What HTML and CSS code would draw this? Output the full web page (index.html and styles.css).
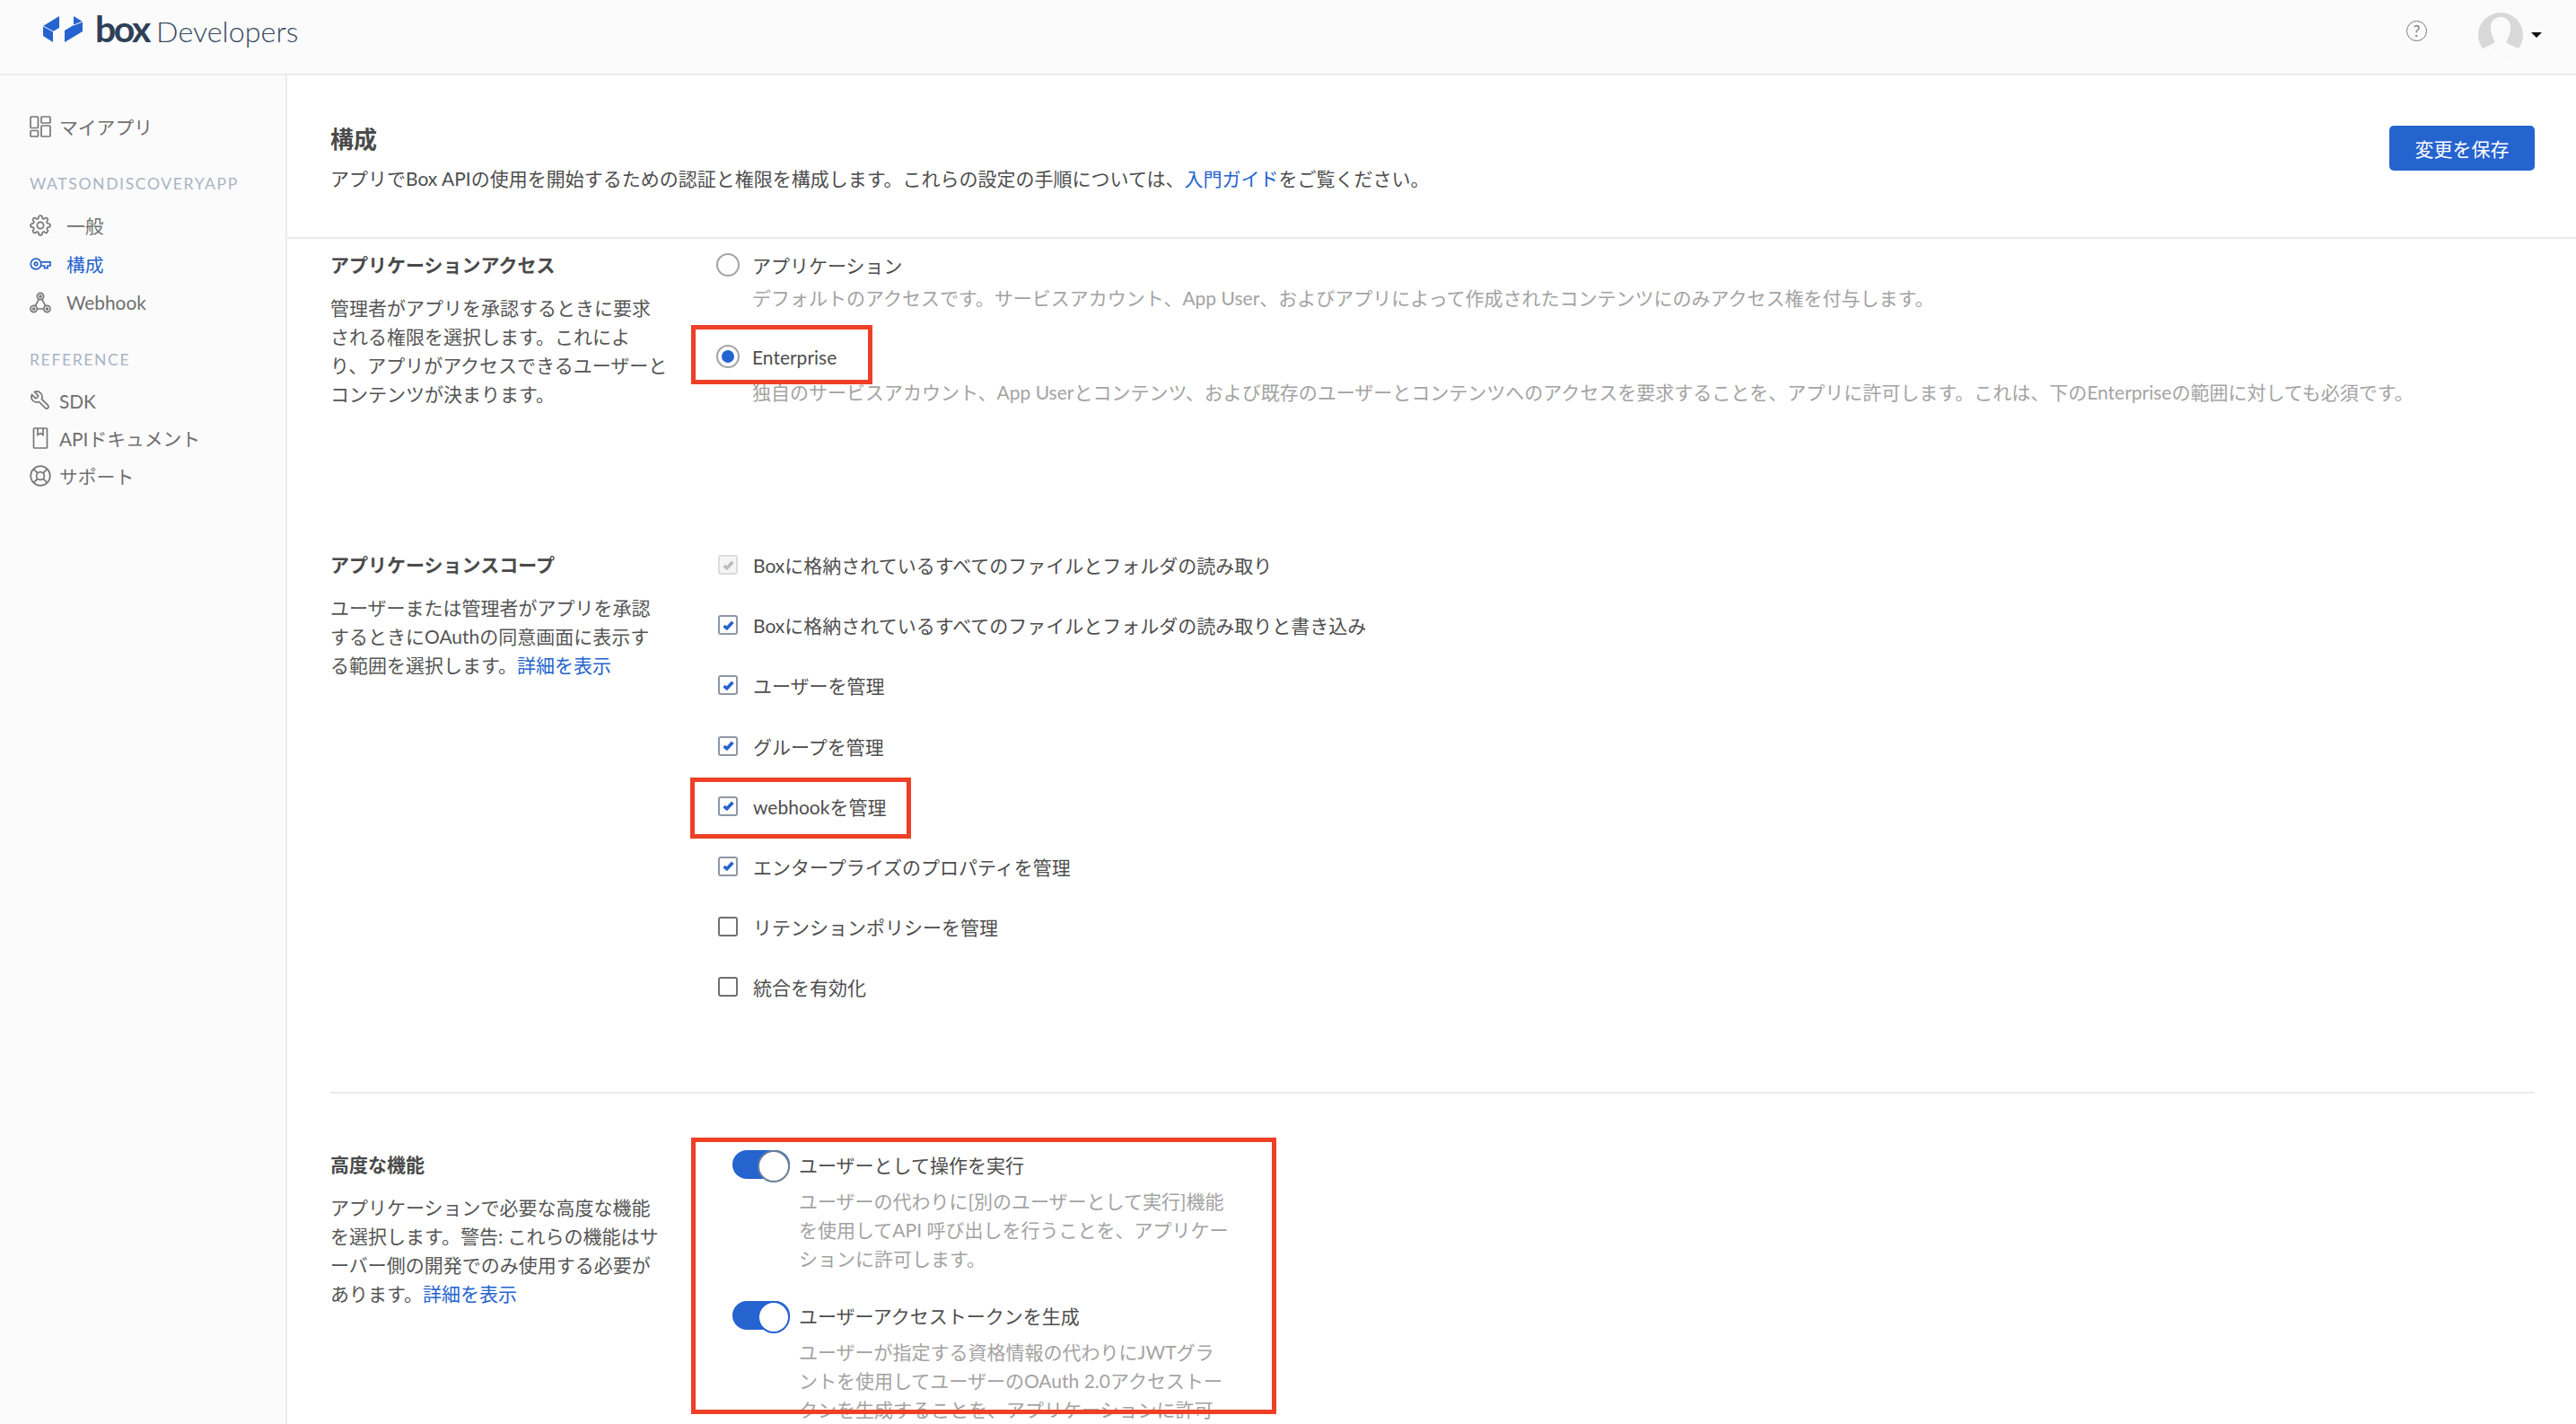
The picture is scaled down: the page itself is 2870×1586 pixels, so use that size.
FILE: index.html
```html
<!DOCTYPE html>
<html lang="ja">
<head>
<meta charset="utf-8">
<title>Box Developers</title>
<link rel="stylesheet" href="styles.css">
</head>
<body>
<div class="app">
  <header class="topbar">
    <a class="logo">
      <svg class="logo-mark" viewBox="0 0 44 30" width="44" height="30">
        <polygon points="0,11 18,0 18,13 11,17 11,29 0,22" fill="#2563cf"/>
        <polygon points="34,0 44,6 44,17 24,29 24,16 34,10" fill="#2563cf"/>
        <line x1="0" y1="11" x2="11" y2="17" stroke="#fbfbfc" stroke-width="1"/>
        <line x1="34" y1="10" x2="44" y2="6" stroke="#fbfbfc" stroke-width="1"/>
      </svg>
      <span class="logo-box">box</span>
      <span class="logo-dev">Developers</span>
    </a>
    <div class="topbar-right">
      <span class="help">?</span>
      <svg class="avatar" viewBox="0 0 50 50" width="50" height="50">
        <circle cx="25" cy="25" r="25" fill="#d8d8d8"/>
        <path d="M14 16c0-7 5-11 11-11s11 4 11 11c0 6-2 12-4 15-1 2 0 3 2 4l11 5c-4 6-12 10-20 10s-16-4-20-10l11-5c2-1 3-2 2-4-2-3-4-9-4-15z" fill="#fbfbfc"/>
      </svg>
      <span class="caret"></span>
    </div>
  </header>

  <div class="body">
    <aside class="sidebar">
      <a class="nav nav-wide">
        <svg class="ico" viewBox="0 0 24 24"><rect x="1" y="1" width="8.5" height="12.5" rx="1"/><rect x="1" y="16.5" width="8.5" height="6.5" rx="1"/><rect x="13" y="1" width="10" height="7" rx="1"/><rect x="13" y="11" width="10" height="12" rx="1"/></svg>
        <span>マイアプリ</span>
      </a>
      <div class="nav-label">WATSONDISCOVERYAPP</div>
      <a class="nav">
        <svg class="ico" viewBox="0 0 24 24"><circle cx="12" cy="12" r="3.6"/><path d="M19.4 15a1.65 1.65 0 0 0 .33 1.82l.06.06a2 2 0 0 1 0 2.83 2 2 0 0 1-2.83 0l-.06-.06a1.65 1.65 0 0 0-1.82-.33 1.65 1.65 0 0 0-1 1.51V21a2 2 0 0 1-2 2 2 2 0 0 1-2-2v-.09A1.65 1.65 0 0 0 9 19.4a1.65 1.65 0 0 0-1.82.33l-.06.06a2 2 0 0 1-2.83 0 2 2 0 0 1 0-2.83l.06-.06a1.65 1.65 0 0 0 .33-1.82 1.65 1.65 0 0 0-1.51-1H3a2 2 0 0 1-2-2 2 2 0 0 1 2-2h.09A1.65 1.65 0 0 0 4.6 9a1.65 1.65 0 0 0-.33-1.82l-.06-.06a2 2 0 0 1 0-2.83 2 2 0 0 1 2.83 0l.06.06a1.65 1.65 0 0 0 1.82.33H9a1.65 1.65 0 0 0 1-1.51V3a2 2 0 0 1 2-2 2 2 0 0 1 2 2v.09a1.65 1.65 0 0 0 1 1.51 1.65 1.65 0 0 0 1.82-.33l.06-.06a2 2 0 0 1 2.83 0 2 2 0 0 1 0 2.83l-.06.06a1.65 1.65 0 0 0-.33 1.82V9a1.65 1.65 0 0 0 1.51 1H21a2 2 0 0 1 2 2 2 2 0 0 1-2 2h-.09a1.65 1.65 0 0 0-1.51 1z"/></svg>
        <span>一般</span>
      </a>
      <a class="nav nav-active">
        <svg class="ico" viewBox="0 0 24 24"><circle cx="7" cy="12" r="5.8"/><circle cx="7" cy="12" r="1.8"/><path d="M12.6 9.8H23V14H20V16.6H16.6V14H12.6"/></svg>
        <span>構成</span>
      </a>
      <a class="nav">
        <svg class="ico" viewBox="0 0 24 24"><circle cx="12" cy="5" r="3.6"/><circle cx="12" cy="5" r="1"/><circle cx="4.6" cy="19" r="3.6"/><circle cx="4.6" cy="19" r="1"/><circle cx="19.4" cy="19" r="3.6"/><circle cx="19.4" cy="19" r="1"/><path d="M10.3 8.2 6.3 15.8M13.7 8.2 17.7 15.8M8.2 19H15.8"/></svg>
        <span>Webhook</span>
      </a>
      <div class="nav-label">REFERENCE</div>
      <a class="nav nav-wide">
        <svg class="ico ico-flip" viewBox="0 0 24 24"><path d="M14.7 6.3a1 1 0 0 0 0 1.4l1.6 1.6a1 1 0 0 0 1.4 0l3.77-3.77a6 6 0 0 1-7.94 7.94l-6.91 6.91a2.12 2.12 0 0 1-3-3l6.91-6.91a6 6 0 0 1 7.94-7.94l-3.76 3.76z"/></svg>
        <span>SDK</span>
      </a>
      <a class="nav nav-wide">
        <svg class="ico" viewBox="0 0 24 24"><rect x="4.5" y="1" width="15" height="22" rx="1"/><path d="M9 1V8.5L12 6.5 15 8.5V1"/></svg>
        <span>APIドキュメント</span>
      </a>
      <a class="nav nav-wide">
        <svg class="ico" viewBox="0 0 24 24"><circle cx="12" cy="12" r="10.8"/><circle cx="12" cy="12" r="4.4"/><path d="M4.4 4.4 8.9 8.9M19.6 4.4 15.1 8.9M4.4 19.6 8.9 15.1M19.6 19.6 15.1 15.1"/></svg>
        <span>サポート</span>
      </a>
    </aside>

    <main class="main">
      <div class="page-head">
        <div>
          <h1 class="page-title">構成</h1>
          <p class="page-sub">アプリでBox APIの使用を開始するための認証と権限を構成します。これらの設定の手順については、<a class="link">入門ガイド</a>をご覧ください。</p>
        </div>
        <button class="save">変更を保存</button>
      </div>

      <div class="sections">
        <section class="section section-access">
          <div class="side">
            <h2 class="side-title">アプリケーションアクセス</h2>
            <p class="side-text">管理者がアプリを承認するときに要求<br>される権限を選択します。これによ<br>り、アプリがアクセスできるユーザーと<br>コンテンツが決まります。</p>
          </div>
          <div class="options">
            <div class="opt"><span class="radio"></span><span class="opt-label">アプリケーション</span></div>
            <p class="opt-desc opt-desc-first">デフォルトのアクセスです。サービスアカウント、App User、およびアプリによって作成されたコンテンツにのみアクセス権を付与します。</p>
            <div class="opt opt-second"><span class="radio radio-on"></span><span class="opt-label">Enterprise</span></div>
            <p class="opt-desc opt-desc-second">独自のサービスアカウント、App Userとコンテンツ、および既存のユーザーとコンテンツへのアクセスを要求することを、アプリに許可します。これは、下のEnterpriseの範囲に対しても必須です。</p>
          </div>
        </section>

        <section class="section section-scope">
          <div class="side">
            <h2 class="side-title">アプリケーションスコープ</h2>
            <p class="side-text">ユーザーまたは管理者がアプリを承認<br>するときにOAuthの同意画面に表示す<br>る範囲を選択します。<a class="link">詳細を表示</a></p>
          </div>
          <div class="checks">
            <div class="chk-row"><span class="chk chk-off"><svg viewBox="0 0 12 10"><path d="M1.5 5.5 4.5 8 10.5 1.5"/></svg></span><span class="opt-label">Boxに格納されているすべてのファイルとフォルダの読み取り</span></div>
            <div class="chk-row"><span class="chk"><svg viewBox="0 0 12 10"><path d="M1.5 5.5 4.5 8 10.5 1.5"/></svg></span><span class="opt-label">Boxに格納されているすべてのファイルとフォルダの読み取りと書き込み</span></div>
            <div class="chk-row"><span class="chk"><svg viewBox="0 0 12 10"><path d="M1.5 5.5 4.5 8 10.5 1.5"/></svg></span><span class="opt-label">ユーザーを管理</span></div>
            <div class="chk-row"><span class="chk"><svg viewBox="0 0 12 10"><path d="M1.5 5.5 4.5 8 10.5 1.5"/></svg></span><span class="opt-label">グループを管理</span></div>
            <div class="chk-row"><span class="chk"><svg viewBox="0 0 12 10"><path d="M1.5 5.5 4.5 8 10.5 1.5"/></svg></span><span class="opt-label">webhookを管理</span></div>
            <div class="chk-row"><span class="chk"><svg viewBox="0 0 12 10"><path d="M1.5 5.5 4.5 8 10.5 1.5"/></svg></span><span class="opt-label">エンタープライズのプロパティを管理</span></div>
            <div class="chk-row"><span class="chk chk-empty"></span><span class="opt-label">リテンションポリシーを管理</span></div>
            <div class="chk-row"><span class="chk chk-empty"></span><span class="opt-label">統合を有効化</span></div>
          </div>
        </section>

        <section class="section section-adv">
          <div class="side">
            <h2 class="side-title">高度な機能</h2>
            <p class="side-text">アプリケーションで必要な高度な機能<br>を選択します。警告: これらの機能はサ<br>ーバー側の開発でのみ使用する必要が<br>あります。<a class="link">詳細を表示</a></p>
          </div>
          <div class="toggles">
            <div class="tgl-item">
              <div class="tgl-row"><span class="tgl tgl-focus"></span><span class="opt-label">ユーザーとして操作を実行</span></div>
              <p class="tgl-desc">ユーザーの代わりに[別のユーザーとして実行]機能<br>を使用してAPI 呼び出しを行うことを、アプリケー<br>ションに許可します。</p>
            </div>
            <div class="tgl-item tgl-item-second">
              <div class="tgl-row"><span class="tgl"></span><span class="opt-label">ユーザーアクセストークンを生成</span></div>
              <p class="tgl-desc">ユーザーが指定する資格情報の代わりにJWTグラ<br>ントを使用してユーザーのOAuth 2.0アクセストー<br>クンを生成することを、アプリケーションに許可</p>
            </div>
          </div>
        </section>
      </div>
    </main>
  </div>

  <div class="mark mark-enterprise"></div>
  <div class="mark mark-webhook"></div>
  <div class="mark mark-advanced"></div>
</div>
</body>
</html>
```

FILE: styles.css
```css
* { box-sizing: border-box; }
html, body { margin: 0; padding: 0; height: 100%; overflow: hidden; background: #fff; }
body {
  font-family: Lato, "Noto Sans CJK JP", sans-serif;
  font-size: 21px;
  color: #4e4e4e;
}
p, h1, h2 { margin: 0; }
.app { position: relative; width: 2870px; height: 1586px; overflow: hidden; display: flex; flex-direction: column; }

/* top bar */
.topbar {
  flex: none; height: 84px; display: flex; justify-content: space-between; align-items: flex-start;
  background: #fbfbfc; border-bottom: 2px solid #ebebeb; padding-left: 48px;
}
.logo { display: flex; align-items: baseline; height: 82px; position: relative; }
.logo-mark { align-self: flex-start; margin-top: 18px; }
.logo-box { margin-left: 14px; font-size: 41px; font-weight: 700; letter-spacing: -2.4px; color: #2e4058; line-height: 64px; }
.logo-dev { margin-left: 8px; font-size: 32.3px; font-weight: 300; color: #3a4c63; line-height: 64px; }
.topbar-right { display: flex; align-items: flex-start; padding-right: 38px; }
.help {
  width: 23px; height: 23px; margin-top: 23px; border: 1.6px solid #7a7a7a; border-radius: 50%;
  display: flex; align-items: center; justify-content: center;
  font-size: 17px; line-height: 1; color: #7a7a7a;
}
.avatar { margin: 14px 0 0 57px; }
.caret { margin: 36px 0 0 9px; width: 0; height: 0; border-left: 6px solid transparent; border-right: 6px solid transparent; border-top: 6px solid #111; }

/* layout */
.body { flex: 1; display: flex; min-height: 0; }
.sidebar {
  flex: none; width: 320px; padding: 36px 0 0 33px; background: #fbfbfc; border-right: 2px solid #ebebeb;
  display: flex; flex-direction: column;
}
.nav { flex: none; height: 43px; display: flex; align-items: center; gap: 17px; color: #6f6f6f; font-size: 20.8px; }
.nav-wide { gap: 9px; height: 42px; }
.nav-active { color: #2563cf; }
.nav-active .ico { stroke: #2563cf; }
.ico { width: 24px; height: 24px; fill: none; stroke: #777; stroke-width: 1.7; flex: none; }
.ico-flip { transform: scaleX(-1); }
.nav-label { flex: none; height: 20px; line-height: 20px; margin: 33px 0 14px; font-size: 17.6px; letter-spacing: 1.6px; color: #a9b4c3; }

/* page head */
.main { flex: 1; min-width: 0; }
.page-head {
  height: 182px; display: flex; justify-content: space-between; align-items: flex-start;
  padding: 54px 46px 0 48px; border-bottom: 2px solid #ebebeb;
}
.page-title { font-size: 26px; font-weight: 700; line-height: 34px; color: #4a4a4a; }
.page-sub { margin-top: 11px; line-height: 32px; color: #4e4e4e; white-space: nowrap; }
.link { color: #2563cf; }
.save {
  width: 162px; height: 50px; margin-top: 2px; border: 0; border-radius: 5px; background: #2563cf; color: #fff;
  font: inherit; padding: 0;
}

/* sections */
.sections { padding: 0 46px 0 48px; }
.section { display: grid; grid-template-columns: 430px 1fr; }
.section-access { padding-top: 13px; height: 348px; }
.section-scope { margin-top: -1px; height: 502px; margin-bottom: 101px; }
.section-adv { border-top: 2px solid #ebebeb; padding-top: 63px; }
.side-title { font-size: 21px; font-weight: 700; line-height: 32px; color: #4a4a4a; }
.side-text { margin-top: 16px; line-height: 32px; color: #555; white-space: nowrap; }

.opt, .chk-row { display: flex; align-items: center; height: 32px; }
.opt-label { color: #4e4e4e; white-space: nowrap; }
.radio { flex: none; width: 26px; height: 26px; margin-right: 14px; border: 2px solid #a3a3a3; border-radius: 50%; display: flex; align-items: center; justify-content: center; }
.radio-on::after { content: ""; width: 14.5px; height: 14.5px; border-radius: 50%; background: #2563cf; }
.opt-desc { margin-left: 40px; line-height: 32px; color: #a3a3a3; white-space: nowrap; }
.opt-desc-first { margin-top: 5px; }
.opt-second { margin-top: 33px; }
.opt-desc-second { margin-top: 8px; }

.checks { display: flex; flex-direction: column; gap: 35.2px; }
.chk {
  flex: none; width: 22px; height: 22px; margin: 0 17px 0 2px; border: 2px solid #8e97a6; border-radius: 3px;
  display: flex; align-items: center; justify-content: center; background: #fff;
}
.chk svg { width: 13px; height: 11px; fill: none; stroke: #2563cf; stroke-width: 3.3; }
.chk-off { border-color: #dcdcdc; background: #f5f5f5; }
.chk-off svg { stroke: #bdbdbd; }
.chk-empty { border-color: #707070; }

.toggles { padding-left: 18px; }
.tgl-row { display: flex; align-items: center; height: 32px; }
.tgl {
  flex: none; position: relative; width: 64px; height: 32px; margin-right: 10px; border-radius: 16px; background: #2563cf;
}
.tgl::after {
  content: ""; position: absolute; right: 0; top: 0; width: 32px; height: 32px; border-radius: 50%;
  background: #fff; border: 2px solid #2563cf;
}
.tgl-focus::after { border-color: #6b7f99; }
.tgl-desc { margin: 9px 0 0 74px; line-height: 32px; color: #a3a3a3; white-space: nowrap; }
.tgl-item-second { margin-top: 31px; }

/* annotations over the content */
.mark { position: absolute; border: 5px solid #ee4027; }
.mark-enterprise { left: 770px; top: 362px; width: 202px; height: 66px; }
.mark-webhook { left: 769px; top: 866px; width: 246px; height: 68px; }
.mark-advanced { left: 770px; top: 1267px; width: 652px; height: 308px; }
```
